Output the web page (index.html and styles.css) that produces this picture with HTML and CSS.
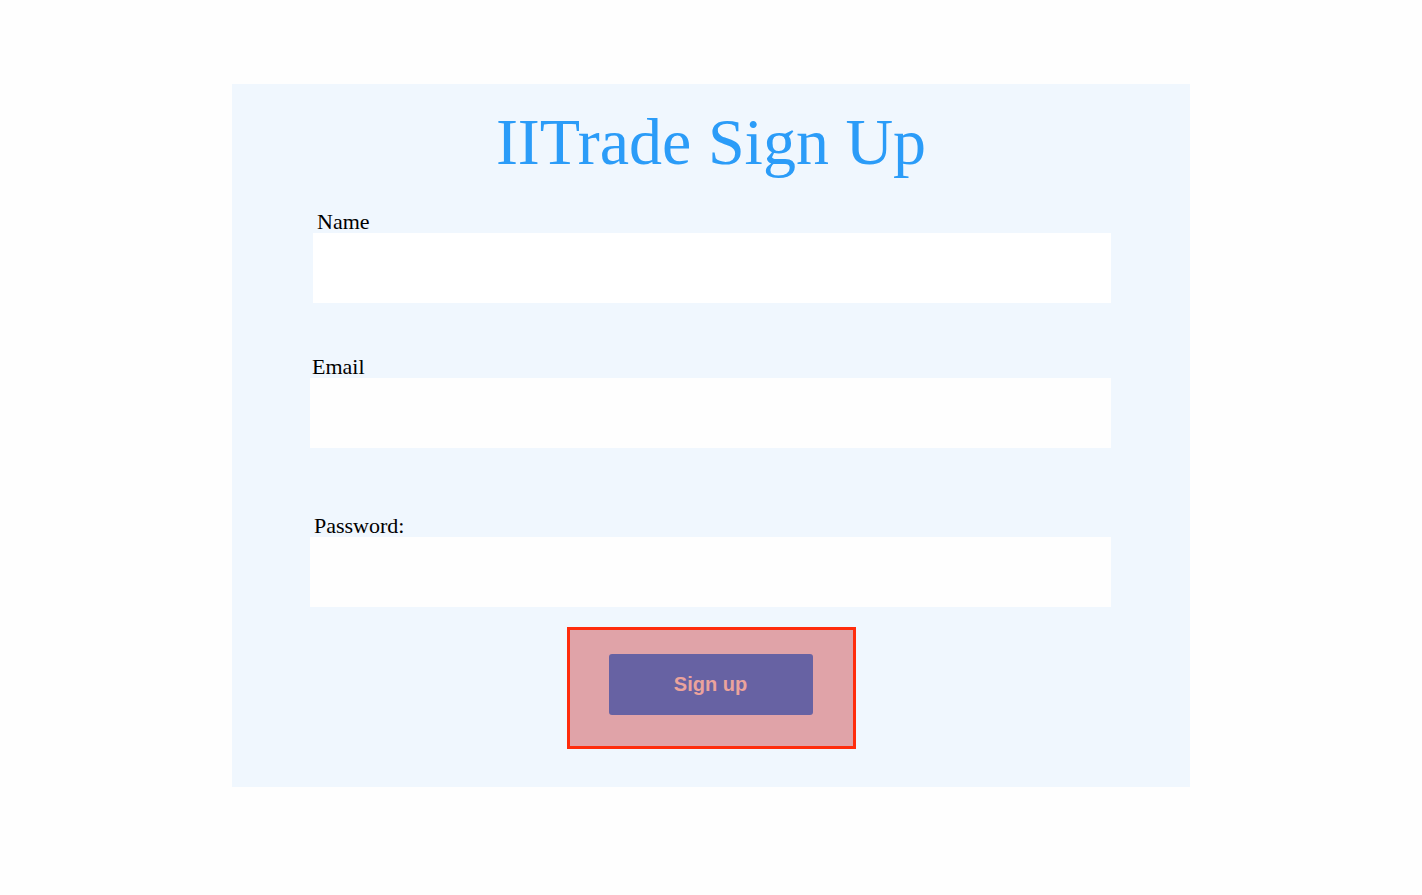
FILE: index.html
```html
<!DOCTYPE html>
<html lang="en">
<head>
<meta charset="utf-8">
<title>IITrade Sign Up</title>
<link rel="stylesheet" href="styles.css">
</head>
<body>
<main class="card">
  <h1 class="title">IITrade Sign Up</h1>
  <form class="form">
    <div class="field field-name">
      <label class="label label-name" for="name">Name</label>
      <input class="input input-name" id="name" type="text">
    </div>
    <div class="field field-email">
      <label class="label label-email" for="email">Email</label>
      <input class="input" id="email" type="email">
    </div>
    <div class="field field-password">
      <label class="label label-password" for="password">Password:</label>
      <input class="input" id="password" type="password">
    </div>
    <div class="actions">
      <div class="button-wrap">
        <button class="button" type="button">Sign up</button>
      </div>
    </div>
  </form>
</main>
</body>
</html>
```
FILE: styles.css
```css
html, body {
  margin: 0;
  padding: 0;
  background: #fefefe;
}

body {
  font-family: "Liberation Serif", "DejaVu Serif", serif;
  padding-top: 84px;
}

.card {
  width: 958px;
  margin-left: 232px;
  background: #f0f7fe;
  padding: 22px 0 38px;
  box-sizing: border-box;
}

.title {
  margin: 0;
  text-align: center;
  font-family: "Liberation Serif", serif;
  font-weight: normal;
  font-size: 66px;
  line-height: 72px;
  color: #2b9cf8;
}

.form {
  display: flex;
  flex-direction: column;
  margin: 0;
}

.field {
  display: flex;
  flex-direction: column;
  align-items: flex-start;
}

.field-name {
  margin-top: 32px;
  padding-left: 81px;
}

.field-email {
  margin-top: 52px;
  padding-left: 78px;
}

.field-password {
  margin-top: 66px;
  padding-left: 78px;
}

.label {
  font-size: 22px;
  line-height: 23px;
  color: #000;
}

.label-name { margin-left: 4px; }
.label-email { margin-left: 2px; }
.label-password { margin-left: 4px; }

.input {
  width: 801px;
  height: 70px;
  border: none;
  outline: none;
  background: #fefefe;
  padding: 0;
  margin: 0;
  box-sizing: border-box;
}

.input-name {
  width: 798px;
  background: #ffffff;
}

.actions {
  display: flex;
  justify-content: center;
  margin-top: 20px;
}

.button-wrap {
  width: 289px;
  box-sizing: border-box;
  border: 3px solid #ff2c0c;
  background: #e0a3a8;
  padding: 24px 39px 31px 39px;
  display: flex;
}

.button {
  width: 204px;
  height: 61px;
  border: none;
  border-radius: 3px;
  background: #6762a3;
  color: #eba39c;
  font-family: "Liberation Sans", Arial, sans-serif;
  font-weight: bold;
  font-size: 20px;
  padding: 0;
  cursor: pointer;
}
```
